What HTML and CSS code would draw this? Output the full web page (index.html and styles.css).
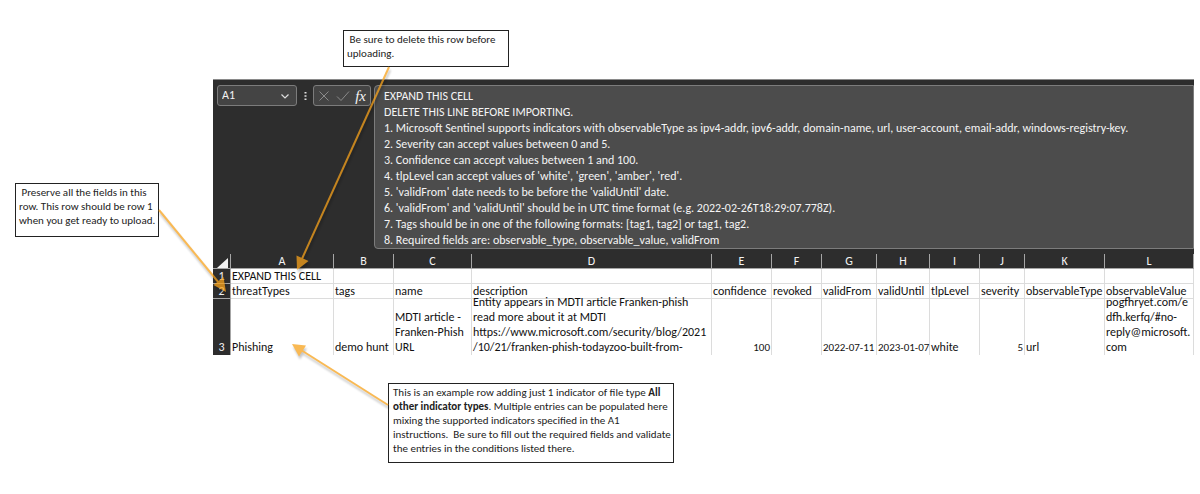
FILE: index.html
```html
<!DOCTYPE html>
<html lang="en">
<head>
<meta charset="utf-8">
<title>Indicator import template</title>
<link rel="stylesheet" href="styles.css">
</head>
<body>
<main class="figure">
  <aside class="note note-top"> Be sure to delete this row before
uploading.</aside>
  <aside class="note note-left"> Preserve all the fields in this
row. This row should be row 1
when you get ready to upload.</aside>
  <section class="sheet">
    <div class="bar">
      <div class="namebox">
        <input class="name-input" aria-label="Name box" value="A1">
        <button class="icon-btn" aria-label="Open name list"><svg width="10" height="10" viewBox="0 0 10 10"><path d="M1.5 3.500 5 7l3.500-3.500" fill="none" stroke="#ddd" stroke-width="1.200"/></svg></button>
      </div>
      <svg class="dots" width="3" height="10" viewBox="0 0 3 10"><path d="M.5 1h2v1.500h-2zM.5 4.300h2v1.500h-2zM.5 7.600h2v1.500h-2z" fill="#ddd"/></svg>
      <div class="tools">
        <button class="icon-btn" aria-label="Cancel"><svg width="12" height="12" viewBox="0 0 12 12"><path d="M1.500 1.500l9 9M10.500 1.500l-9 9" fill="none" stroke="#8a8a8a"/></svg></button>
        <button class="icon-btn" aria-label="Enter"><svg width="14" height="12" viewBox="0 0 14 12"><path d="M1 6.500l4 4L13 1.500" fill="none" stroke="#8a8a8a"/></svg></button>
        <button class="icon-btn fx" aria-label="Insert function">fx</button>
      </div>
      <div class="formula">EXPAND THIS CELL
DELETE THIS LINE BEFORE IMPORTING.
1. Microsoft Sentinel supports indicators with observableType as ipv4-addr, ipv6-addr, domain-name, url, user-account, email-addr, windows-registry-key.
2. Severity can accept values between 0 and 5.
3. Confidence can accept values between 1 and 100.
4. tlpLevel can accept values of 'white', 'green', 'amber', 'red'.
5. 'validFrom' date needs to be before the 'validUntil' date.
6. 'validFrom' and 'validUntil' should be in UTC time format (e.g. 2022-02-26T18:29:07.778Z).
7. Tags should be in one of the following formats: [tag1, tag2] or tag1, tag2.
8. Required fields are: observable_type, observable_value, validFrom</div>
    </div>
    <table class="grid">
      <colgroup>
        <col class="c-row"><col class="c-a"><col class="c-b"><col class="c-c"><col><col class="c-e"><col class="c-f"><col class="c-g"><col class="c-h"><col class="c-i"><col class="c-j"><col class="c-k"><col class="c-l">
      </colgroup>
      <thead>
        <tr><th><svg class="corner" width="11" height="10" viewBox="0 0 11 10"><path d="M11 0v10H0z" fill="#f2f2f2"/></svg></th><th>A</th><th>B</th><th>C</th><th>D</th><th>E</th><th>F</th><th>G</th><th>H</th><th>I</th><th>J</th><th>K</th><th>L</th></tr>
      </thead>
      <tbody>
        <tr><th>1</th><td>EXPAND THIS CELL</td><td></td><td></td><td></td><td></td><td></td><td></td><td></td><td></td><td></td><td></td><td></td></tr>
        <tr><th>2</th><td>threatTypes</td><td>tags</td><td>name</td><td>description</td><td>confidence</td><td>revoked</td><td>validFrom</td><td>validUntil</td><td>tlpLevel</td><td>severity</td><td>observableType</td><td>observableValue</td></tr>
        <tr class="tall"><th>3</th><td>Phishing</td><td>demo hunt</td><td>MDTI article -
Franken-Phish
URL</td><td><div class="wrap">Entity appears in MDTI article Franken-phish
read more about it at MDTI
https://www.microsoft.com/security/blog/2021
/10/21/franken-phish-todayzoo-built-from-</div></td><td class="num">100</td><td></td><td class="date">2022-07-11</td><td class="date">2023-01-07</td><td>white</td><td class="num">5</td><td>url</td><td><div class="wrap">pogfhryet.com/e
dfh.kerfq/#no-
reply@microsoft.
com</div></td></tr>
      </tbody>
    </table>
  </section>
  <aside class="note note-bottom">This is an example row adding just 1 indicator of file type <b>All</b>
<b>other indicator types</b>. Multiple entries can be populated here
mixing the supported indicators specified in the A1
instructions.  Be sure to fill out the required fields and validate
the entries in the conditions listed there.</aside>
  <svg class="arrows" width="700" height="494" viewBox="0 0 700 494" aria-hidden="true">
    <g class="arrow"><path class="shaft" d="M389 67 301 261"/><path class="head" d="M297 270 296.500 255.500 308.500 261z"/></g>
    <g class="arrow"><path class="shaft" d="M159 210 219 283"/><path class="head" d="M226 292 213.500 285 223.500 277z"/></g>
    <g class="arrow"><path class="shaft" d="M388 405 301 350"/><path class="head" d="M292 344 306 345.500 299 356.500z"/></g>
  </svg>
</main>
</body>
</html>
```
FILE: styles.css
```css
* { box-sizing: border-box; }

body {
  margin: 0;
  background: #fff;
  color: #111;
  font: 12px/15px Carlito, Lato, "Open Sans", sans-serif;
}

.figure {
  position: relative;
  display: grid;
  grid-template-columns: 213px minmax(0, 1fr);
  padding: 30px 6px 30px 0;
}

.note {
  border: 1px solid #222;
  background: #fff;
  color: #222;
  font-size: 11px;
  line-height: 14px;
  white-space: pre;
  justify-self: start;
  align-self: start;
}

.note-top {
  grid-column: 2;
  width: 166px;
  margin: 0 0 12px 130px;
  padding: 2px 3px 5px;
}

.note-left {
  grid-column: 1;
  grid-row: 2;
  width: 144px;
  margin: 104px 0 0 15px;
  padding: 2px 3px 8px;
}

.note-bottom {
  grid-column: 2;
  width: 286px;
  margin: 28px 0 0 175px;
  padding: 2px 4px 6px;
}

.sheet {
  grid-column: 2;
  grid-row: 2;
  background: #2d2d2d;
  border-top: 1px solid #8a8a8a;
  color: #f4f4f4;
}

.bar {
  display: flex;
  align-items: flex-start;
  padding: 5px 0 5px 4px;
}

.namebox, .tools {
  display: flex;
  align-items: center;
  height: 21px;
  background: #444;
  border: 1px solid #7c7c7c;
  border-radius: 3px;
}

.namebox {
  width: 80px;
  padding: 0 6px 0 4px;
}

.name-input {
  flex: 1;
  min-width: 0;
  padding: 0;
  border: 0;
  background: none;
  color: inherit;
  font: inherit;
}

.icon-btn {
  display: flex;
  padding: 0;
  border: 0;
  background: none;
  color: inherit;
}

.dots { margin: 6px 6px 0 7px; }

.tools {
  width: 58px;
  justify-content: space-between;
  padding: 0 4px;
}

.fx { font: italic 15px/16px "Liberation Serif", serif; }

.formula {
  flex: 1;
  min-width: 0;
  margin-left: 3px;
  padding: 2px 0 0 9px;
  background: #4c4c4c;
  border: 1px solid #7c7c7c;
  border-radius: 4px 0 0 4px;
  line-height: 16px;
  white-space: pre;
}

.grid {
  width: 100%;
  table-layout: fixed;
  border-collapse: separate;
  border-spacing: 0;
}

.c-row { width: 18px; }
.c-a { width: 103px; }
.c-b { width: 60px; }
.c-c { width: 78px; }
.c-e { width: 60px; }
.c-f { width: 50px; }
.c-g { width: 55px; }
.c-h { width: 53px; }
.c-i { width: 50px; }
.c-j { width: 45px; }
.c-k { width: 80px; }
.c-l { width: 89px; }

.grid th, .grid td {
  height: 15px;
  padding: 0;
  border-right: 1px solid #dcdcdc;
  border-bottom: 1px solid #dcdcdc;
  line-height: 14px;
  white-space: pre;
}

.grid th {
  border-color: #a6a6a6;
  font-weight: 400;
  text-align: center;
}

.grid td {
  padding-left: 1px;
  background: #fff;
  color: #111;
}

.grid .tall th, .grid .tall td {
  height: 56px;
  border-bottom: 0;
  line-height: 15px;
  vertical-align: bottom;
}

.grid .num {
  padding-right: 1px;
  font-size: 11px;
  text-align: right;
}

.grid .date { font-size: 11px; }

.wrap {
  display: flex;
  align-items: flex-end;
  height: 56px;
}

.corner {
  display: block;
  margin: 3px 2px 0 auto;
}

.arrows {
  position: absolute;
  top: 0;
  left: 0;
  pointer-events: none;
}

.arrow {
  opacity: 0.75;
  filter: drop-shadow(1px 3px 1px rgba(0, 0, 0, 0.3));
}

.shaft {
  fill: none;
  stroke: #f7a21b;
  stroke-width: 2;
}

.head { fill: #f7a21b; }
```
